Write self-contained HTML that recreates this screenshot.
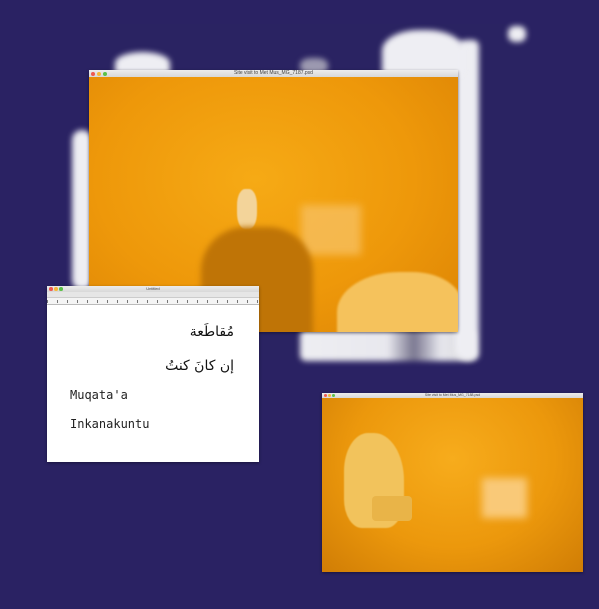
<!DOCTYPE html>
<html><head><meta charset="utf-8"><style>
*{margin:0;padding:0;box-sizing:border-box}
body{width:599px;height:609px;background:#2a2263;position:relative;overflow:hidden;font-family:"Liberation Sans",sans-serif}
.a{position:absolute}
.cl{position:absolute;background:#eeeef3;filter:blur(3px);border-radius:40%}
.win{position:absolute;overflow:hidden;box-shadow:0 1px 3px rgba(0,0,0,.4)}
.tb{background:linear-gradient(#ececec,#d8d8d8);position:relative;font-size:5px;color:#444;text-align:center}
.dot{position:absolute;border-radius:50%;width:4px;height:4px;top:1px}
</style></head><body>
<div class="a" style="left:90px;top:24px;width:440px;height:336px;background:#2a2362"></div>
<!-- clouds -->
<div class="cl" style="left:300px;top:330px;width:175px;height:31px;border-radius:6px;background:linear-gradient(90deg,#eeeef2 0%,#e8e8ee 50%,#7a7790 65%,#e5e5ec 80%,#ddd 100%)"></div>
<div class="cl" style="left:455px;top:40px;width:24px;height:320px;border-radius:12px 6px 6px 12px"></div>
<div class="cl" style="left:382px;top:30px;width:82px;height:46px;border-radius:45% 45% 10% 10%"></div>
<div class="cl" style="left:508px;top:26px;width:18px;height:16px"></div>
<div class="cl" style="left:72px;top:130px;width:20px;height:160px;border-radius:10px"></div>
<div class="cl" style="left:115px;top:52px;width:55px;height:22px;border-radius:50% 50% 0 0"></div>
<div class="cl" style="left:300px;top:58px;width:28px;height:16px;background:#9c99b0"></div>
<!-- main window -->
<div class="win" style="left:89px;top:70px;width:369px;height:262px">
 <div class="tb" style="height:7px;line-height:7px">Site visit to Met Mus_MG_7187.psd
  <span class="dot" style="left:2px;top:1.5px;background:#ee5a50"></span><span class="dot" style="left:8px;top:1.5px;background:#f5b83a"></span><span class="dot" style="left:14px;top:1.5px;background:#5bc048"></span></div>
 <div style="height:255px;background:radial-gradient(ellipse at 45% 40%,#f6aa15 0%,#ee980a 55%,#dc8404 100%);position:relative">
  <div class="a" style="left:212px;top:128px;width:60px;height:50px;background:#f7bf5e;filter:blur(4px);opacity:.8"></div>
  <div class="a" style="left:148px;top:112px;width:20px;height:40px;background:#f3d49a;border-radius:40%;filter:blur(.5px)"></div>
  <div class="a" style="left:112px;top:150px;width:112px;height:110px;background:#bf7406;border-radius:40% 40% 0 0;filter:blur(3px)"></div>
  <div class="a" style="left:248px;top:195px;width:125px;height:80px;background:#f5c25c;border-radius:50% 40% 0 0;filter:blur(1px)"></div>
 </div>
</div>
<!-- text editor -->
<div class="win" style="left:47px;top:286px;width:212px;height:176px;background:#fff">
 <div class="tb" style="height:6px;line-height:6px;font-size:4px">Untitled
  <span class="dot" style="left:2px;top:1px;width:3.5px;height:3.5px;background:#ee5a50"></span><span class="dot" style="left:7px;top:1px;width:3.5px;height:3.5px;background:#f5b83a"></span><span class="dot" style="left:12px;top:1px;width:3.5px;height:3.5px;background:#5bc048"></span></div>
 <div style="height:6px;background:#e6e6e6;border-bottom:1px solid #ccc"></div>
 <div style="height:7px;background:#f4f4f4;border-bottom:1px solid #bbb;background-image:repeating-linear-gradient(90deg,#777 0 1px,transparent 1px 10px);background-size:100% 3px;background-repeat:no-repeat;background-position:0 2px"></div>
 <div class="a" style="right:25px;top:38px;font-size:14px;font-family:'DejaVu Sans',sans-serif;color:#111" dir="rtl">مُقاطَعة</div>
 <div class="a" style="right:25px;top:72px;font-size:14px;font-family:'DejaVu Sans',sans-serif;color:#111" dir="rtl">إن كانَ كنتُ</div>
 <div class="a" style="left:23px;top:102px;font-size:12px;font-family:'DejaVu Sans Mono',monospace;color:#222">Muqata'a</div>
 <div class="a" style="left:23px;top:131px;font-size:12px;font-family:'DejaVu Sans Mono',monospace;color:#222">Inkanakuntu</div>
</div>
<!-- bottom right window -->
<div class="win" style="left:322px;top:393px;width:261px;height:179px">
 <div class="tb" style="height:5px;line-height:5px;font-size:3.5px">Site visit to Met Mus_MG_7188.psd
  <span class="dot" style="left:2px;top:1px;width:3px;height:3px;background:#ee5a50"></span><span class="dot" style="left:6px;top:1px;width:3px;height:3px;background:#f5b83a"></span><span class="dot" style="left:10px;top:1px;width:3px;height:3px;background:#5bc048"></span></div>
 <div style="height:174px;background:radial-gradient(ellipse at 50% 35%,#f7ac1c 0%,#ec980c 55%,#d07d05 100%);position:relative">
  <div class="a" style="left:160px;top:80px;width:45px;height:40px;background:#f9c978;filter:blur(4px)"></div>
  <div class="a" style="left:22px;top:35px;width:60px;height:95px;background:#f2c35c;border-radius:40% 50% 30% 30%;filter:blur(.5px)"></div>
  <div class="a" style="left:50px;top:98px;width:40px;height:25px;background:#e9b448;border-radius:4px"></div>
 </div>
</div>
</body></html>
